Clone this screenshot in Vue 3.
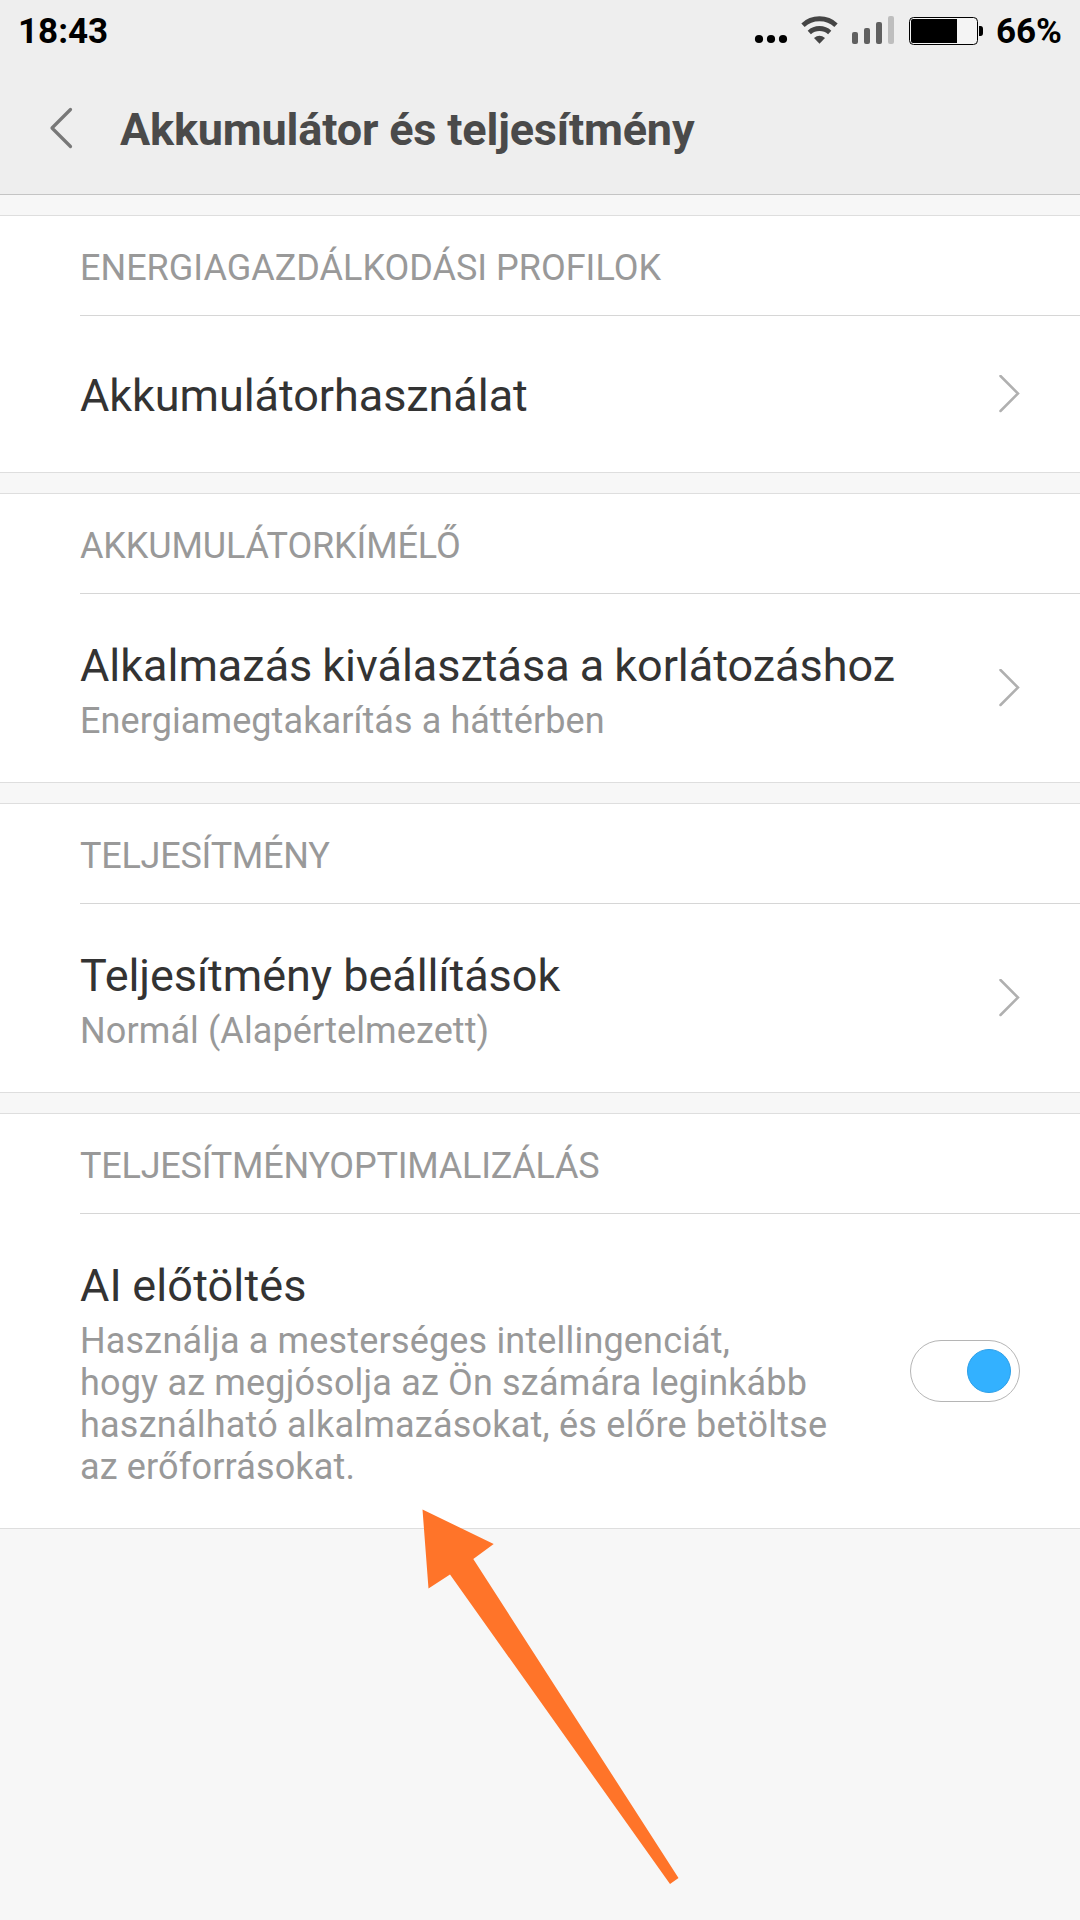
<script setup>
const sections = [
  {
    header: { text: 'ENERGIAGAZDÁLKODÁSI PROFILOK', track: 0 },
    title: { text: 'Akkumulátorhasználat', track: -0.06 },
    lines: [],
    kind: 'link',
    size: 'single',
  },
  {
    header: { text: 'AKKUMULÁTORKÍMÉLŐ', track: -0.14 },
    title: { text: 'Alkalmazás kiválasztása a korlátozáshoz', track: -0.02, word: -1.1 },
    lines: [{ text: 'Energiamegtakarítás a háttérben', track: 0.09 }],
    kind: 'link',
    size: 'double',
  },
  {
    header: { text: 'TELJESÍTMÉNY', track: -0.24 },
    title: { text: 'Teljesítmény beállítások', track: -0.05 },
    lines: [{ text: 'Normál (Alapértelmezett)', track: 0.1 }],
    kind: 'link',
    size: 'double',
  },
  {
    header: { text: 'TELJESÍTMÉNYOPTIMALIZÁLÁS', track: -0.22 },
    title: { text: 'AI előtöltés', track: 0.15, word: -1 },
    lines: [
      { text: 'Használja a mesterséges intellingenciát,', track: 0.17 },
      { text: 'hogy az megjósolja az Ön számára leginkább', track: 0.17 },
      { text: 'használható alkalmazásokat, és előre betöltse', track: 0.23 },
      { text: 'az erőforrásokat.', track: 0.16 },
    ],
    kind: 'toggle',
    size: 'tall',
  },
]

const tracking = ({ track, word = 0 }) => ({
  letterSpacing: `${track}px`,
  wordSpacing: `${word}px`,
})
</script>

<template>
  <div class="screen">
    <header class="top">
      <div class="status">
        <span class="clock">18:43</span>
        <div class="indicators">
          <svg class="icons" width="232" height="52" viewBox="752 0 232 52">
            <g fill="#000">
              <circle cx="759" cy="39" r="4.1" />
              <circle cx="771" cy="39" r="4.1" />
              <circle cx="783" cy="39" r="4.1" />
            </g>
            <g fill="none" stroke="#444" stroke-width="4.8">
              <path d="M803 25.2C812 16.600 827 16.600 836 25.200" />
              <path d="M809.300 32.400C815 27.200 824 27.200 829.700 32.400" />
            </g>
            <path d="M814 38Q819.500 33.400 825 38L819.500 43.800Z" fill="#444" />
            <g fill="#606060">
              <rect x="852" y="32" width="6" height="12" rx="2" />
              <rect x="864" y="28" width="6" height="16" rx="2" />
              <rect x="876" y="22" width="6" height="22" rx="2" />
              <rect x="888" y="16" width="6" height="28" rx="2" fill="#bebebe" />
            </g>
            <rect x="909.5" y="17.500" width="68" height="27" rx="4" fill="#f4f4f4" stroke="#000" />
            <path d="M913 19H957V43H913Q911 43 911 41V21Q911 19 913 19Z" fill="#000" />
            <path d="M979 26H980.500Q983 26 983 29V33Q983 36 980.500 36H979Z" fill="#000" />
          </svg>
          <span class="percent">66%</span>
        </div>
      </div>
      <div class="titlebar">
        <svg class="back" width="24" height="44" viewBox="0 0 24 44">
          <path d="M21.500 3.500L3 22L21.500 40.500" fill="none" stroke="#787878" stroke-width="3.200" stroke-linecap="round" stroke-linejoin="round" />
        </svg>
        <h1>Akkumulátor és teljesítmény</h1>
      </div>
    </header>

    <main>
      <section v-for="s in sections" :key="s.header.text" class="card">
        <h2 :style="tracking(s.header)">{{ s.header.text }}</h2>
        <div class="row" :class="s.size">
          <div class="text">
            <div class="name" :style="tracking(s.title)">{{ s.title.text }}</div>
            <div v-for="line in s.lines" :key="line.text" class="sub" :style="tracking(line)">{{ line.text }}</div>
          </div>
          <svg v-if="s.kind === 'link'" class="chevron" width="22" height="38" viewBox="0 0 22 38">
            <path d="M2.500 1L20 18.500L2.500 36" fill="none" stroke="#b0b0b0" stroke-width="2.500" stroke-linecap="round" />
          </svg>
          <div v-else class="toggle"><span class="knob"></span></div>
        </div>
      </section>
    </main>

    <svg class="pointer" width="260" height="378" viewBox="420 1506 260 378">
      <path d="M422.500 1509.500L493.700 1544L473.300 1559L678.500 1878L670 1884L450 1574.500L428.500 1588.500Z" fill="#ff7429" />
    </svg>
  </div>
</template>

<style>
body {
  margin: 0;
  background: #f7f7f7;
}
</style>

<style scoped>
.screen {
  position: relative;
  width: 1080px;
  height: 1920px;
  overflow: hidden;
  background: #f7f7f7;
  font-family: Roboto, "Liberation Sans", sans-serif;
}
.top {
  box-sizing: border-box;
  height: 195px;
  background: #eee;
  border-bottom: 1px solid #c4c4c4;
}
.status {
  display: flex;
  justify-content: space-between;
  height: 60px;
  padding: 0 18px;
  font-size: 35px;
  font-weight: 700;
  line-height: 63px;
  color: #000;
}
.indicators {
  display: flex;
  gap: 12px;
}
.titlebar {
  display: flex;
  align-items: center;
  height: 136px;
  padding-left: 49px;
}
.back {
  margin-right: 47px;
}
h1 {
  margin: 0;
  padding-top: 2px;
  font-size: 45px;
  font-weight: 700;
  line-height: 53px;
  letter-spacing: -0.18px;
  color: #4a4a4a;
}
main {
  display: flex;
  flex-direction: column;
  gap: 20px;
  padding-top: 20px;
}
.card {
  background: #fff;
  border-top: 1px solid #dedede;
  border-bottom: 1px solid #dedede;
}
h2 {
  height: 99px;
  margin: 0 0 0 80px;
  border-bottom: 1px solid #d6d6d6;
  font-size: 36px;
  font-weight: 400;
  line-height: 105px;
  color: #999;
}
.row {
  display: flex;
  align-items: center;
  justify-content: space-between;
  padding: 0 60px 0 80px;
}
.single {
  height: 156px;
}
.double {
  height: 188px;
}
.tall {
  height: 314px;
}
.text {
  padding-top: 4px;
}
.single .text {
  padding-top: 3px;
}
.name {
  font-size: 45px;
  line-height: 53px;
  color: #333;
  white-space: nowrap;
}
.name + .sub {
  margin-top: 8px;
}
.sub {
  font-size: 36px;
  line-height: 42px;
  color: #999;
  white-space: nowrap;
}
.toggle {
  box-sizing: border-box;
  display: flex;
  align-items: center;
  justify-content: flex-end;
  width: 110px;
  height: 62px;
  padding-right: 8px;
  border: 1px solid #b5b5b5;
  border-radius: 31px;
}
.knob {
  box-sizing: border-box;
  width: 44px;
  height: 44px;
  border: 1px solid #2c9fe8;
  border-radius: 50%;
  background: #33b1ff;
}
.pointer {
  position: absolute;
  left: 420px;
  top: 1506px;
}
</style>
